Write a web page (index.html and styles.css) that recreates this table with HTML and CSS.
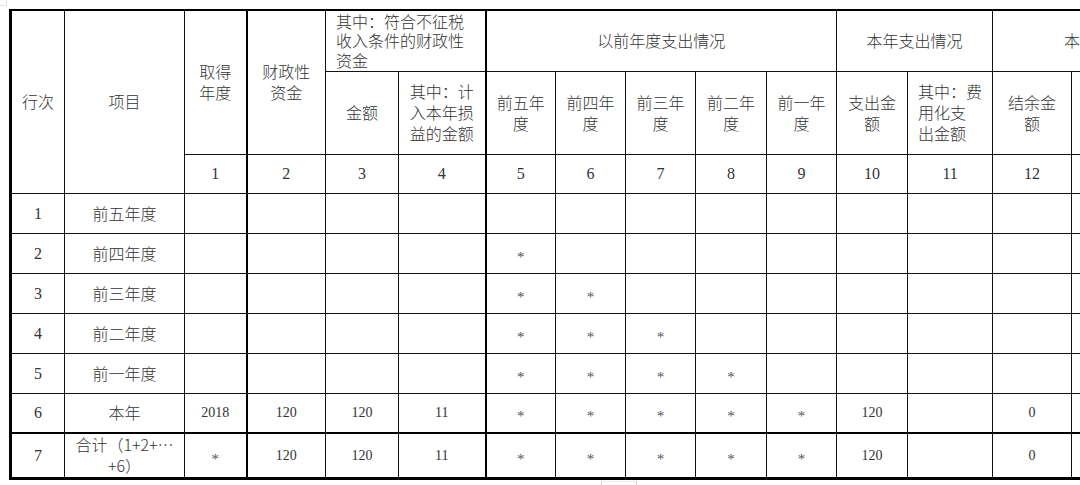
FILE: index.html
```html
<!DOCTYPE html>
<html lang="zh-CN">
<head>
<meta charset="utf-8">
<title>专项用途财政性资金纳税调整明细表</title>
<link rel="stylesheet" href="styles.css">
</head>
<body>
<div class="corner"></div>
<table class="sheet">
  <colgroup>
    <col class="w54"><col class="w120"><col class="w62"><col class="w79">
    <col class="w73"><col class="w87"><col class="w70"><col class="w70">
    <col class="w70"><col class="w71"><col class="w70"><col class="w71">
    <col class="w85"><col class="w79"><col class="w80"><col class="w80">
  </colgroup>
  <thead>
    <tr class="h1">
      <th rowspan="3">行次</th>
      <th rowspan="3">项目</th>
      <th rowspan="2">取得<br>年度</th>
      <th rowspan="2" class="tl">财政性<br>资金</th>
      <th colspan="2" class="left tight">其中：符合不征税<br>收入条件的财政性<br>资金</th>
      <th colspan="5" class="tl">以前年度支出情况</th>
      <th colspan="2">本年支出情况</th>
      <th colspan="3">本年结余情况</th>
    </tr>
    <tr class="h2">
      <th>金额</th>
      <th>其中：计<br>入本年损<br>益的金额</th>
      <th class="tl">前五年<br>度</th>
      <th>前四年<br>度</th>
      <th>前三年<br>度</th>
      <th>前二年<br>度</th>
      <th>前一年<br>度</th>
      <th>支出金<br>额</th>
      <th class="left">其中：费<br>用化支<br>出金额</th>
      <th>结余金<br>额</th>
      <th>其中：上<br>缴财政<br>金额</th>
      <th>应计入本<br>年应税收<br>入金额</th>
    </tr>
    <tr class="h3">
      <th class="num">1</th>
      <th class="num tl">2</th>
      <th class="num">3</th>
      <th class="num">4</th>
      <th class="num tl">5</th>
      <th class="num">6</th>
      <th class="num">7</th>
      <th class="num">8</th>
      <th class="num">9</th>
      <th class="num">10</th>
      <th class="num">11</th>
      <th class="num">12</th>
      <th class="num">13</th>
      <th class="num">14</th>
    </tr>
  </thead>
  <tbody>
    <tr>
      <td class="num">1</td><td class="cn">前五年度</td><td></td><td class="tl"></td><td></td><td></td>
      <td class="tl"></td><td></td><td></td><td></td><td></td><td></td><td></td><td></td><td></td><td></td>
    </tr>
    <tr>
      <td class="num">2</td><td class="cn">前四年度</td><td></td><td class="tl"></td><td></td><td></td>
      <td class="tl"><span class="star">*</span></td><td></td><td></td><td></td><td></td><td></td><td></td><td></td><td></td><td></td>
    </tr>
    <tr>
      <td class="num">3</td><td class="cn">前三年度</td><td></td><td class="tl"></td><td></td><td></td>
      <td class="tl"><span class="star">*</span></td><td><span class="star">*</span></td><td></td><td></td><td></td><td></td><td></td><td></td><td></td><td></td>
    </tr>
    <tr>
      <td class="num">4</td><td class="cn">前二年度</td><td></td><td class="tl"></td><td></td><td></td>
      <td class="tl"><span class="star">*</span></td><td><span class="star">*</span></td><td><span class="star">*</span></td><td></td><td></td><td></td><td></td><td></td><td></td><td></td>
    </tr>
    <tr>
      <td class="num">5</td><td class="cn">前一年度</td><td></td><td class="tl"></td><td></td><td></td>
      <td class="tl"><span class="star">*</span></td><td><span class="star">*</span></td><td><span class="star">*</span></td><td><span class="star">*</span></td><td></td><td></td><td></td><td></td><td></td><td></td>
    </tr>
    <tr>
      <td class="num">6</td><td class="cn">本年</td><td class="val">2018</td><td class="val tl">120</td><td class="val">120</td><td class="val">11</td>
      <td class="tl"><span class="star">*</span></td><td><span class="star">*</span></td><td><span class="star">*</span></td><td><span class="star">*</span></td><td><span class="star">*</span></td>
      <td class="val">120</td><td></td><td class="val">0</td><td></td><td></td>
    </tr>
    <tr class="total">
      <td class="num">7</td><td class="cn small">合计（1+2+…<br>+6）</td><td><span class="star">*</span></td><td class="val tl">120</td><td class="val">120</td><td class="val">11</td>
      <td class="tl"><span class="star">*</span></td><td><span class="star">*</span></td><td><span class="star">*</span></td><td><span class="star">*</span></td><td><span class="star">*</span></td>
      <td class="val">120</td><td></td><td class="val">0</td><td></td><td></td>
    </tr>
  </tbody>
</table>
<div class="tab-mark"></div>
</body>
</html>
```

FILE: styles.css
```css
html, body {
  margin: 0;
  padding: 0;
  background: #fff;
  overflow: hidden;
  width: 1080px;
  height: 485px;
}

body {
  font-family: "Liberation Serif", "Noto Sans CJK SC", serif;
  color: #333;
  position: relative;
}

.corner {
  position: absolute;
  left: 0;
  top: 0;
  width: 6px;
  height: 5px;
  border-right: 1px solid #e4e4e4;
  border-bottom: 1px solid #e4e4e4;
}

.sheet {
  border-collapse: collapse;
  table-layout: fixed;
  width: 1221px;
  margin: 9px 0 0 9px;
  border-left: 3px solid #000;
  border-top: 2px solid #000;
  border-bottom: 3px solid #000;
}

.w54 { width: 54px; }
.w62 { width: 62px; }
.w70 { width: 70px; }
.w71 { width: 71px; }
.w73 { width: 73px; }
.w79 { width: 79px; }
.w80 { width: 80px; }
.w85 { width: 85px; }
.w87 { width: 87px; }
.w120 { width: 120px; }

.sheet th,
.sheet td {
  border: 1px solid #111;
  padding: 0;
  text-align: center;
  vertical-align: middle;
  font-family: "Noto Sans CJK SC", sans-serif;
  font-weight: 300;
  font-size: 16px;
  line-height: 21px;
  color: #333;
  overflow: hidden;
}

.sheet .tl { border-left: 2px solid #000; }

.sheet th.left {
  text-align: left;
  padding-left: 10px;
}

.sheet th.tight {
  line-height: 19.5px;
}

.h1 { height: 61px; }
.h2 { height: 83px; }
.h3 { height: 39px; }
tbody tr { height: 40px; }
tbody tr.total { height: 45px; }

.sheet tr.total td { border-top: 2px solid #000; }

.sheet .num {
  font-family: "Liberation Serif", serif;
  font-weight: 400;
  font-size: 16px;
  color: #333;
}

.sheet .val {
  font-family: "Liberation Serif", serif;
  font-weight: 400;
  font-size: 14px;
  color: #333;
}

.sheet .cn {
  font-size: 16px;
}

.sheet .small {
  font-size: 16px;
  line-height: 21px;
}

.star {
  display: inline-block;
  font-family: "Liberation Serif", serif;
  font-size: 15px;
  color: #555;
  transform: translateY(3px);
}

.tab-mark {
  width: 34px;
  height: 4px;
  margin: 1px 0 0 601px;
  border-left: 1px solid #ccc;
  border-right: 1px solid #ccc;
  border-top: 1px solid #eee;
}
```
